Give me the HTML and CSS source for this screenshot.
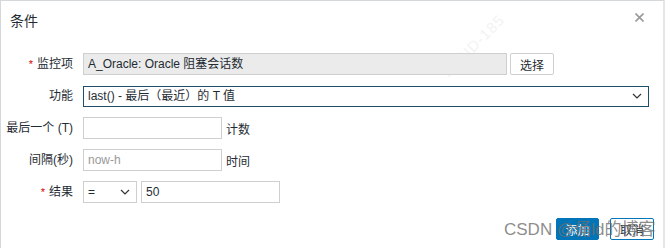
FILE: index.html
```html
<!DOCTYPE html>
<html>
<head>
<meta charset="utf-8">
<link rel="stylesheet" href="styles.css">
</head>
<body>
<div class="dialog">
  <div class="wm-diag">HAND-185</div>
  <div class="head">
    <h3 class="title">条件</h3>
    <span class="close">
      <svg width="9" height="9" viewBox="0 0 9 9"><path d="M0.5 0.5L8.5 8.5M8.5 0.5L0.5 8.5" stroke="#9a9a9a" stroke-width="1.6"/></svg>
    </span>
  </div>
  <div class="form">
    <label class="lbl"><span class="req">*</span>监控项</label>
    <div class="ctl">
      <div class="inp ro w-item">A_Oracle: Oracle 阻塞会话数</div>
      <button class="btn-alt btn-sel">选择</button>
    </div>

    <label class="lbl">功能</label>
    <div class="ctl">
      <div class="inp sel focus w-func">
        <span>last() - 最后（最近）的 T 值</span>
        <svg width="10" height="6" viewBox="0 0 10 6"><path d="M1 1L5 5L9 1" fill="none" stroke="#333" stroke-width="1.2"/></svg>
      </div>
    </div>

    <label class="lbl">最后一个 (T)</label>
    <div class="ctl">
      <div class="inp w-small"></div>
      <span class="suffix">计数</span>
    </div>

    <label class="lbl">间隔(秒)</label>
    <div class="ctl">
      <div class="inp w-small ph">now-h</div>
      <span class="suffix">时间</span>
    </div>

    <label class="lbl"><span class="req">*</span>结果</label>
    <div class="ctl">
      <div class="inp sel w-op">
        <span>=</span>
        <svg width="10" height="6" viewBox="0 0 10 6"><path d="M1 1L5 5L9 1" fill="none" stroke="#333" stroke-width="1.2"/></svg>
      </div>
      <div class="inp w-val">50</div>
    </div>
  </div>
  <div class="foot">
    <button class="btn-main">添加</button>
    <button class="btn-alt btn-cancel">取消</button>
  </div>
  <div class="wm-csdn">CSDN @俑ld的博客</div>
</div>
</body>
</html>
```

FILE: styles.css
```css
* { box-sizing: border-box; }
html, body { margin: 0; padding: 0; background: #fff; }
body {
  font-family: "Liberation Sans", Arial, "Noto Sans CJK SC", sans-serif;
  font-size: 12px;
  color: #1f2c33;
}
.dialog {
  position: relative;
  width: 665px;
  height: 248px;
  border-top: 1px solid #d4d8da;
  border-left: 1px solid #d4d8da;
  border-right: 2px solid #e4e6e7;
  overflow: hidden;
}
.head, .form, .foot { position: relative; }
.head {
  display: flex;
  justify-content: space-between;
  align-items: flex-start;
  padding: 12px 19px 0 9px;
  height: 52px;
}
.title {
  margin: 0;
  font-size: 14px;
  font-weight: normal;
  line-height: 16px;
  color: #1f2c33;
}
.close { margin-top: -2px; }
.form {
  display: grid;
  grid-template-columns: 72px 1fr;
  column-gap: 10px;
  row-gap: 10px;
  align-items: center;
}
.lbl {
  text-align: right;
  line-height: 22px;
  white-space: nowrap;
}
.req { color: #d40000; margin-right: 4px; font-size: 11px; }
.ctl { display: flex; align-items: center; gap: 4px; height: 22px; }
.inp {
  height: 22px;
  border: 1px solid #cfcfcf;
  background: #fff;
  padding: 0 4px;
  line-height: 20px;
  color: #1f2c33;
  display: flex;
  align-items: center;
}
.ro { background: #ebebeb; }
.sel { justify-content: space-between; padding-right: 6px; }
.focus { border-color: #1f4e69; height: 21px; }
.w-item { width: 424px; }
.w-func { width: 566px; }
.w-small { width: 139px; }
.w-op { width: 54px; }
.w-val { width: 139px; }
.ph { color: #9a9a9a; }
.btn-alt {
  height: 22px;
  border: 1px solid #cfcfcf;
  background: #fff;
  font: inherit;
  color: #1f2c33;
  border-radius: 2px;
  padding: 0;
}
.btn-sel { width: 44px; margin-left: -1px; }
.foot {
  display: flex;
  justify-content: flex-end;
  gap: 11px;
  padding: 15px 9px 0 0;
}
.btn-main {
  width: 43px;
  height: 22px;
  border: 1px solid #0275b8;
  background: #0275b8;
  color: #fff;
  font: inherit;
  border-radius: 2px;
  padding: 0;
}
.btn-cancel { width: 44px; border-color: #0275b8; }
.wm-diag {
  position: absolute;
  left: 432px;
  top: 36px;
  transform: rotate(-45deg);
  font-size: 15px;
  color: #f3f3f3;
  letter-spacing: 1px;
}
.wm-csdn {
  position: absolute;
  left: 503px;
  top: 218px;
  font-size: 17px;
  line-height: 22px;
  color: rgba(110, 110, 110, 0.8);
  white-space: nowrap;
}
```
